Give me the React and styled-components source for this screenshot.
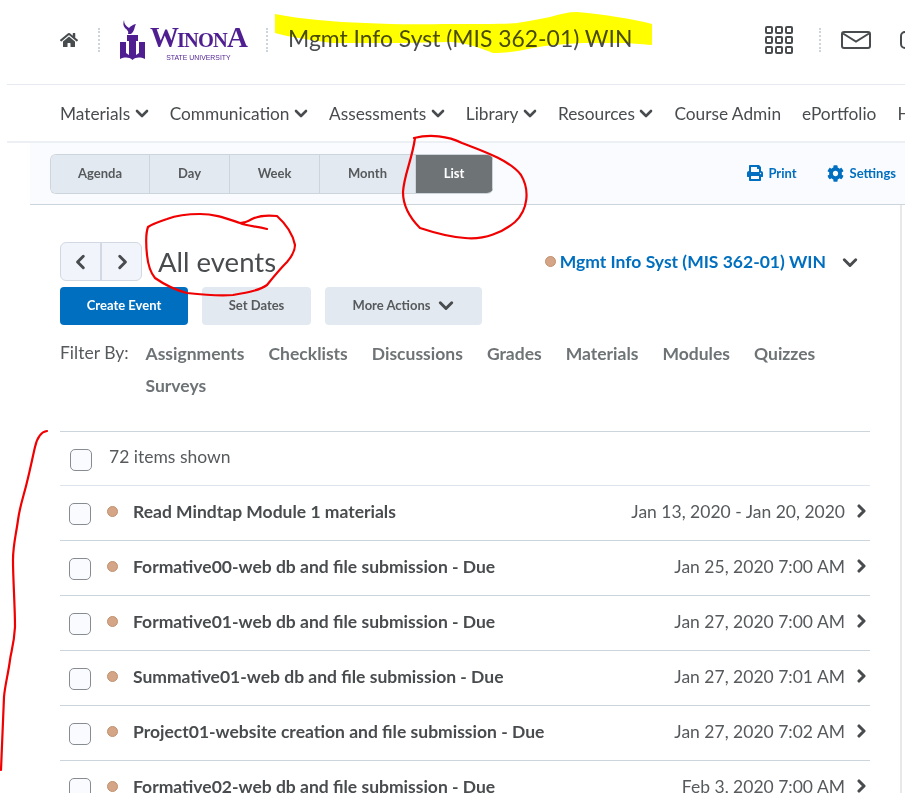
import React from 'react'
import styled, { createGlobalStyle } from 'styled-components'
import { FaHome, FaPrint, FaCog } from 'react-icons/fa'

const GlobalStyle = createGlobalStyle`
  html, body {
    margin: 0;
    padding: 0;
    background: #fff;
    overflow: hidden;
  }
  body {
    font-family: "Lato", "Noto Sans", sans-serif;
    color: #494c4e;
  }
`

const Page = styled.div`
  position: relative;
  width: 905px;
  height: 793px;
  overflow: hidden;
  background: #fff;
`

const Header = styled.header`
  height: 85px;
  margin-left: 7px;
  padding-left: 53px;
  padding-bottom: 5px;
  box-sizing: border-box;
  border-bottom: 1px solid #e6eaf0;
  display: flex;
  align-items: center;
  white-space: nowrap;
`

const Divider = styled.span`
  flex: none;
  width: 0;
  height: 24px;
  margin: 0 ${(p) => p.$right || 20}px 0 ${(p) => p.$left || 20}px;
  border-left: 2px dotted #cdd5dc;
`

const LogoWrap = styled.div`
  flex: none;
  width: 126px;
  height: 40px;
  display: flex;
  gap: 5px;
`

const LogoText = styled.div`
  width: 96px;
  display: flex;
  flex-direction: column;
  align-items: center;
  color: #4f1f91;
  padding-top: 6px;
`

const LogoName = styled.span`
  font-family: "Liberation Serif", serif;
  font-weight: 700;
  font-size: 20.5px;
  line-height: 23px;
  letter-spacing: -0.9px;
  white-space: nowrap;
`

const LogoBig = styled.span`
  font-size: 29px;
  letter-spacing: -2px;
`

const LogoSub = styled.span`
  font-family: "Liberation Sans", sans-serif;
  font-size: 8px;
  line-height: 9px;
  font-weight: 400;
  margin-top: 1px;
  transform: scaleX(0.86);
`

const CourseTitle = styled.h1`
  flex: none;
  width: 477px;
  margin: 0;
  font-weight: 400;
  font-size: 22.9px;
  color: #494c4e;
  position: relative;
  top: -2px;
`

const IconBox = styled.span`
  flex: none;
  display: flex;
  color: #494c4e;
  margin-left: ${(p) => p.$left || 0}px;
`

const Nav = styled.nav`
  height: 58px;
  margin-left: 7px;
  padding-left: 53px;
  box-sizing: border-box;
  display: flex;
  align-items: center;
  gap: 21px;
  white-space: nowrap;
  border-bottom: 2px solid #eceff3;
`

const NavItem = styled.span`
  flex: none;
  display: flex;
  align-items: center;
  gap: 4.5px;
  font-size: 17.3px;
  color: #494c4e;
`

const Body = styled.div`
  width: 902px;
  height: 650px;
  box-sizing: border-box;
  border-right: 2px solid #e8e8e8;
`

const Toolbar = styled.div`
  height: 62px;
  margin-left: 30px;
  margin-right: -5px;
  padding: 11px 9px 0 20px;
  box-sizing: border-box;
  background: #f9fbff;
  border-bottom: 1px solid #cdd5dc;
  display: flex;
  align-items: flex-start;
  justify-content: space-between;
  position: relative;
`

const ViewGroup = styled.div`
  display: flex;
  height: 40px;
  border-radius: 6px;
  overflow: hidden;
  border: 1px solid #cdd5dc;
  box-sizing: border-box;
  border-right: none;
`

const ViewButton = styled.div`
  width: ${(p) => p.$width}px;
  padding-bottom: 2px;
  display: flex;
  align-items: center;
  justify-content: center;
  font-size: 13px;
  font-weight: 700;
  background: ${(p) => (p.$active ? '#6e7376' : '#e3e9f1')};
  color: ${(p) => (p.$active ? '#fff' : '#565a5c')};
  border-right: 1px solid #cdd5dc;
  box-sizing: border-box;
`

const ToolLinks = styled.div`
  display: flex;
  gap: 30px;
  height: 38px;
  align-items: center;
`

const ToolLink = styled.span`
  display: flex;
  align-items: center;
  gap: ${(p) => p.$gap || 5}px;
  font-size: 13px;
  font-weight: 700;
  color: #006fbf;
`

const Main = styled.main`
  margin-left: 60px;
  width: 810px;
`

const TitleRow = styled.div`
  height: 39px;
  margin-top: 37px;
  display: flex;
  align-items: center;
`

const Pager = styled.div`
  width: 82px;
  height: 39px;
  box-sizing: border-box;
  display: flex;
  border: 1px solid #d3d9e3;
  border-radius: 6px;
  background: #f1f5fb;
  overflow: hidden;
`

const PagerButton = styled.div`
  flex: 1;
  display: flex;
  align-items: center;
  justify-content: center;
  & + & {
    border-left: 2px solid #d3d9e3;
  }
`

const EventsTitle = styled.h2`
  margin: 0 0 0 16px;
  font-weight: 400;
  font-size: 27.5px;
  color: #494c4e;
  flex: 1;
`

const CalendarPick = styled.div`
  display: flex;
  align-items: center;
  gap: 4px;
  padding-right: 12px;
  font-size: 17.5px;
  font-weight: 700;
  color: #006fbf;
  white-space: nowrap;
`

const CalendarName = styled.span`
  margin-right: 12px;
`

const Dot = styled.span`
  flex: none;
  width: 11px;
  height: 11px;
  margin-left: ${(p) => p.$left || 0}px;
  border-radius: 50%;
  background: #d5a587;
  border: 1px solid #c2906d;
  box-sizing: border-box;
`

const ActionRow = styled.div`
  display: flex;
  margin-top: 6px;
  gap: 14px;
`

const ActionButton = styled.div`
  width: ${(p) => p.$width}px;
  height: 38px;
  padding-bottom: 2px;
  box-sizing: border-box;
  border-radius: 4px;
  display: flex;
  align-items: center;
  justify-content: center;
  gap: 8px;
  font-size: 13px;
  font-weight: 700;
  background: ${(p) => (p.$primary ? '#006fbf' : '#e3e9f1')};
  color: ${(p) => (p.$primary ? '#fff' : '#565a5c')};
`

const FilterRow = styled.div`
  display: flex;
  margin-top: 13px;
`

const FilterLabel = styled.span`
  width: 85.5px;
  flex: none;
  font-size: 17.5px;
  line-height: 32px;
  color: #565a5c;
  position: relative;
  top: -1px;
`

const FilterList = styled.div`
  display: flex;
  flex-wrap: wrap;
  column-gap: 24px;
  width: 720px;
`

const FilterItem = styled.span`
  font-size: 17.5px;
  line-height: 32px;
  font-weight: 700;
  color: #6e7376;
`

const List = styled.div`
  margin-top: 29px;
  border-top: 1px solid #cdd5dc;
`

const CountRow = styled.div`
  height: 53px;
  box-sizing: content-box;
  display: flex;
  align-items: center;
  padding: 0 0 0 10px;
  gap: 17px;
  font-size: 17.5px;
  color: #565a5c;
  border-bottom: 1px solid #dfe5ec;
  & > span:last-child {
    position: relative;
    top: -2px;
  }
`

const Checkbox = styled.span`
  flex: none;
  width: 22px;
  height: 22px;
  margin-top: 3px;
  box-sizing: border-box;
  border: 1px solid #868c91;
  border-radius: 5px;
  background: #f9fbff;
`

const EventRow = styled.div`
  height: 55px;
  box-sizing: border-box;
  display: flex;
  align-items: center;
  padding: 0 2px 4px 9px;
  border-bottom: 1px solid #cdd5dc;
  & > ${Checkbox} {
    margin-top: 5px;
  }
`

const EventName = styled.span`
  flex: 1;
  margin-left: 15px;
  font-size: 17.5px;
  font-weight: 700;
  color: #494c4e;
  white-space: nowrap;
`

const EventDate = styled.span`
  font-size: 17.5px;
  color: #565a5c;
  white-space: nowrap;
  margin-right: 9px;
`

const Scribble = styled.svg`
  position: absolute;
  left: 0;
  top: 0;
  pointer-events: none;
  mix-blend-mode: ${(p) => p.$blend || 'normal'};
`

const Chevron = ({ dir = 'down', size = 14, width = 2.6 }) => {
  const points = {
    down: '2,5 7,10 12,5',
    left: '9,2 4,7 9,12',
    right: '5,2 10,7 5,12',
  }[dir]
  return (
    <svg width={size} height={size} viewBox="0 0 14 14" fill="none" stroke="#494c4e" strokeWidth={width} strokeLinecap="round" strokeLinejoin="round">
      <polyline points={points} />
    </svg>
  )
}

const TorchLogo = () => (
  <svg width="25" height="40" viewBox="0 0 25 40" fill="#4f1f91">
    <path d="M0 22H6V33L9 35V21H7V15H18V21H16V35L19 33V22H25V39C20 37 16 37 12.5 40C9 37 5 37 0 39Z" />
    <path d="M4 0C4 4 6 6 9 8C11 6 13 4.5 16 4C14 7 15 11 11 14H8C9 11 7 10 5 8C3 6 3 3 4 0Z" />
  </svg>
)

const navItems = [
  ['Materials', true],
  ['Communication', true],
  ['Assessments', true],
  ['Library', true],
  ['Resources', true],
  ['Course Admin', false],
  ['ePortfolio', false],
  ['Help', false],
]

const views = [
  ['Agenda', 99],
  ['Day', 80],
  ['Week', 90],
  ['Month', 96],
  ['List', 77, true],
]

const filters = ['Assignments', 'Checklists', 'Discussions', 'Grades', 'Materials', 'Modules', 'Quizzes', 'Surveys']

const events = [
  ['Read Mindtap Module 1 materials', 'Jan 13, 2020 - Jan 20, 2020'],
  ['Formative00-web db and file submission - Due', 'Jan 25, 2020 7:00 AM'],
  ['Formative01-web db and file submission - Due', 'Jan 27, 2020 7:00 AM'],
  ['Summative01-web db and file submission - Due', 'Jan 27, 2020 7:01 AM'],
  ['Project01-website creation and file submission - Due', 'Jan 27, 2020 7:02 AM'],
  ['Formative02-web db and file submission - Due', 'Feb 3, 2020 7:00 AM'],
]

function App() {
  return (
    <Page>
      <GlobalStyle />
      <Header>
        <IconBox><FaHome size={18} /></IconBox>
        <Divider />
        <LogoWrap>
          <TorchLogo />
          <LogoText>
            <LogoName><LogoBig>W</LogoBig>INON<LogoBig>A</LogoBig></LogoName>
            <LogoSub>STATE UNIVERSITY</LogoSub>
          </LogoText>
        </LogoWrap>
        <Divider />
        <CourseTitle>Mgmt Info Syst (MIS 362-01) WIN</CourseTitle>
        <IconBox>
          <svg width="28" height="28" viewBox="0 0 28 28" fill="none" stroke="#494c4e" strokeWidth="2">
            {[1, 11, 21].map((y) =>
              [1, 11, 21].map((x) => <rect key={`${x}-${y}`} x={x} y={y} width="6" height="6" rx="1" />)
            )}
          </svg>
        </IconBox>
        <Divider $left={26} $right={20} />
        <IconBox>
          <svg width="30" height="18" viewBox="0 0 30 18" fill="none" stroke="#494c4e" strokeWidth="2">
            <rect x="1" y="1" width="28" height="16" rx="2" />
            <polyline points="2,2.5 15,10.5 28,2.5" />
          </svg>
        </IconBox>
        <IconBox $left={29}>
          <svg width="20" height="20" viewBox="0 0 20 20" fill="none" stroke="#494c4e" strokeWidth="2">
            <rect x="1" y="2" width="18" height="16" rx="4" />
          </svg>
        </IconBox>
      </Header>

      <Nav>
        {navItems.map(([label, hasMenu]) => (
          <NavItem key={label}>
            {label}
            {hasMenu && <Chevron />}
          </NavItem>
        ))}
      </Nav>

      <Body>
        <Toolbar>
          <ViewGroup>
            {views.map(([label, width, active]) => (
              <ViewButton key={label} $width={width} $active={active}>{label}</ViewButton>
            ))}
          </ViewGroup>
          <ToolLinks>
            <ToolLink><FaPrint size={16} />Print</ToolLink>
            <ToolLink $gap={6}><FaCog size={17} />Settings</ToolLink>
          </ToolLinks>
        </Toolbar>

        <Main>
          <TitleRow>
            <Pager>
              <PagerButton><Chevron dir="left" size={16} width={2.6} /></PagerButton>
              <PagerButton><Chevron dir="right" size={16} width={2.6} /></PagerButton>
            </Pager>
            <EventsTitle>All events</EventsTitle>
            <CalendarPick>
              <Dot />
              <CalendarName>Mgmt Info Syst (MIS 362-01) WIN</CalendarName>
              <Chevron size={16} />
            </CalendarPick>
          </TitleRow>

          <ActionRow>
            <ActionButton $primary $width={128}>Create Event</ActionButton>
            <ActionButton $width={109}>Set Dates</ActionButton>
            <ActionButton $width={157}>More Actions <Chevron size={16} /></ActionButton>
          </ActionRow>

          <FilterRow>
            <FilterLabel>Filter By:</FilterLabel>
            <FilterList>
              {filters.map((f) => <FilterItem key={f}>{f}</FilterItem>)}
            </FilterList>
          </FilterRow>

          <List>
            <CountRow>
              <Checkbox />
              <span>72 items shown</span>
            </CountRow>
            {events.map(([name, date]) => (
              <EventRow key={name}>
                <Checkbox />
                <Dot $left={16} />
                <EventName>{name}</EventName>
                <EventDate>{date}</EventDate>
                <Chevron dir="right" size={14} width={3.1} />
              </EventRow>
            ))}
          </List>
        </Main>
      </Body>

      <Scribble width="905" height="793" $blend="multiply">
        <path
          fill="#ffff00"
          d="M275 14 C300 19 335 22 365 23 C400 25 430 24 450 24 C480 24 505 24 517 23 C530 21 540 19 550 17 C560 14 568 12 577 12 C592 13 605 15 617 17 C630 19 642 21 652 24 L652 45 C640 44 630 43 617 43 L583 43 C565 44 548 45 533 48 C520 51 505 53 493 53 C485 50 478 47 470 45 C462 43 456 42 450 42 L400 43 L333 43 C315 41 300 38 287 36 L275 33 Z"
        />
      </Scribble>
      <Scribble width="905" height="793" fill="none" stroke="#f00000" strokeWidth="2.2" strokeLinecap="round" strokeLinejoin="round">
        <path d="M414 138 C430 134 448 136 462 143 C480 150 510 160 521 175 C530 190 528 210 515 222 C503 232 485 240 465 238 C450 237 432 232 420 228 C410 218 403 205 403 192 C404 175 412 160 415 138" />
        <path d="M267 229 C255 226 247 226 240 223 C225 218 215 214 200 214 C185 214 175 216 167 219 C158 222 152 224 148 227 C145 235 146 245 147 255 C148 265 150 272 155 278 C165 285 175 290 187 293 C205 295 220 296 233 295 C250 292 260 290 267 285 C275 275 282 267 287 262 C293 255 295 250 295 245 C293 235 287 225 277 216 C268 215 258 216 252 219 C247 222 243 223 240 223" />
        <path d="M47 431 C40 432 37 438 35 447 C32 460 30 470 27 482 C24 495 20 505 18 520 C16 535 13 545 13 560 C13 580 15 605 15 627 C14 645 11 652 10 660 C8 675 5 685 4 697 C3 720 2 745 1 770" />
      </Scribble>
    </Page>
  )
}

export default App
